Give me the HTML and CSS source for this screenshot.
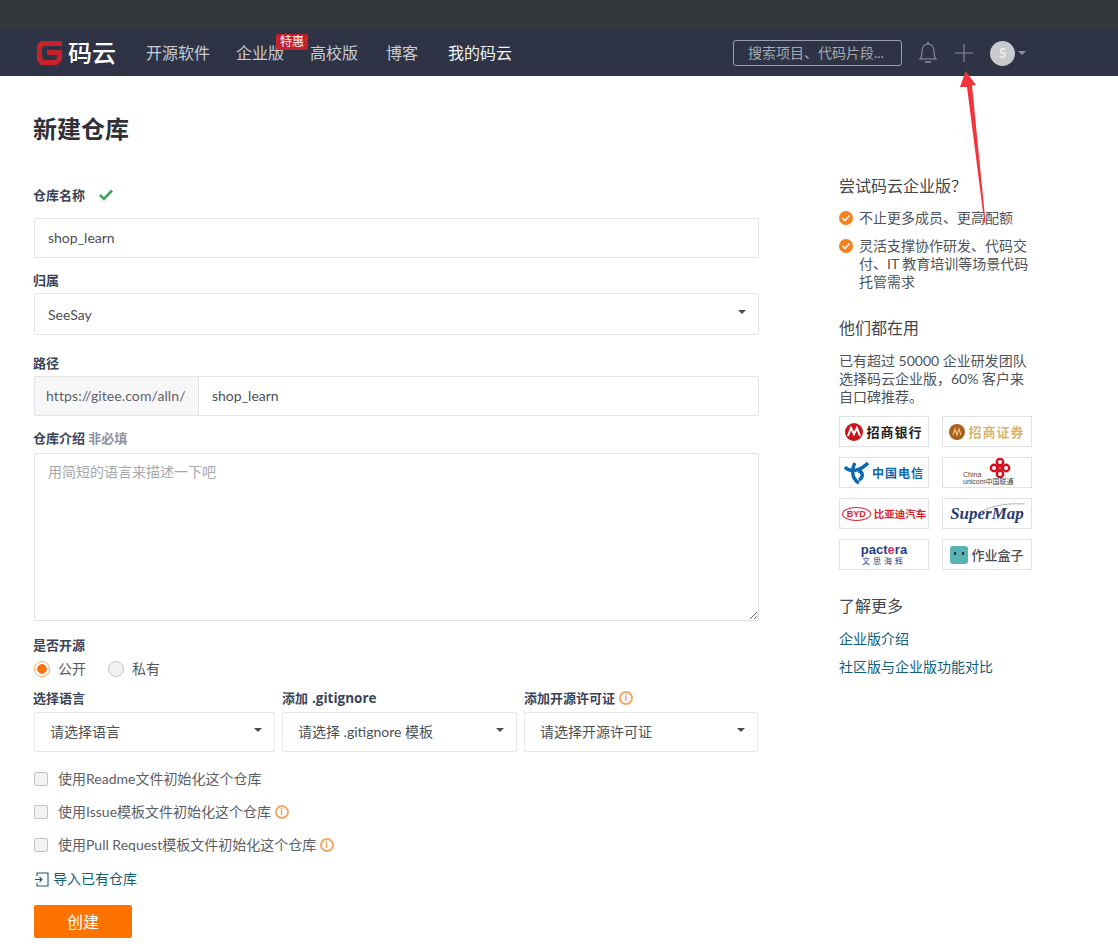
FILE: index.html
```html
<!DOCTYPE html>
<html lang="zh-CN">
<head>
<meta charset="utf-8">
<title>新建仓库</title>
<link rel="stylesheet" href="styles.css">
</head>
<body>
<div class="topbar"></div>
<header class="nav">
  <a class="brand">
    <svg class="brand-icon" width="25" height="24" viewBox="0 0 25 24"><path d="M4 0H25V5H7L5 7V17L7 19H18L20 17V14H10V9H25V19L20 24H4L0 20V4Z" fill="#c5222a"/></svg>
    <span class="brand-text">码云</span>
  </a>
  <a class="nav-link link-open">开源软件</a>
  <a class="nav-link link-ent">企业版<span class="badge">特惠</span></a>
  <a class="nav-link link-edu">高校版</a>
  <a class="nav-link link-blog">博客</a>
  <a class="nav-link link-mine">我的码云</a>
  <div class="nav-right">
    <div class="search">搜索项目、代码片段...</div>
    <svg class="bell" width="20" height="24" viewBox="0 0 20 24" fill="none" stroke="#8f939d" stroke-width="1.1"><path d="M2 18H18C16 16 16 14 16 10C16 6 13.500 3 10 3C6.500 3 4 6 4 10C4 14 4 16 2 18Z"/><path d="M10 3V1M7 21H13" stroke-width="1.600"/></svg>
    <svg class="plus" width="18" height="18" viewBox="0 0 18 18" stroke="#8a8e98" stroke-width="1.100"><path d="M0 9H18M9 0V18"/></svg>
    <div class="avatar">S</div>
    <span class="avatar-caret"></span>
  </div>
</header>

<main class="page">
  <section class="form">
    <h1 class="title">新建仓库</h1>
    <div class="label label-name">仓库名称
      <svg class="ok" width="14" height="12" viewBox="0 0 14 12" fill="none" stroke="#3fa55b" stroke-width="2.600"><path d="M1 6L5 10L13 1.500"/></svg>
    </div>
    <div class="control">shop_learn</div>
    <div class="label label-owner">归属</div>
    <div class="control control-select">SeeSay<span class="caret"></span></div>
    <div class="label label-path">路径</div>
    <div class="path-group">
      <div class="path-prefix">https://gitee.com/alln/</div>
      <div class="path-value">shop_learn</div>
    </div>
    <div class="label label-desc">仓库介绍 <span class="optional">非必填</span></div>
    <textarea class="desc" placeholder="用简短的语言来描述一下吧"></textarea>
    <div class="label label-open">是否开源</div>
    <div class="radios">
      <span class="radio radio-on"></span><span class="radio-text">公开</span>
      <span class="radio"></span><span class="radio-text">私有</span>
    </div>
    <div class="triple">
      <div class="col">
        <div class="label">选择语言</div>
        <div class="pick">请选择语言<span class="caret"></span></div>
      </div>
      <div class="col col-next">
        <div class="label">添加 <b class="latin-bold">.gitignore</b></div>
        <div class="pick">请选择 .gitignore 模板<span class="caret"></span></div>
      </div>
      <div class="col col-next">
        <div class="label">添加开源许可证 <span class="info">i</span></div>
        <div class="pick">请选择开源许可证<span class="caret"></span></div>
      </div>
    </div>
    <div class="check"><span class="box"></span>使用Readme文件初始化这个仓库</div>
    <div class="check"><span class="box"></span>使用Issue模板文件初始化这个仓库 <span class="info">i</span></div>
    <div class="check"><span class="box"></span>使用Pull Request模板文件初始化这个仓库 <span class="info">i</span></div>
    <a class="import">
      <svg width="15" height="15" viewBox="0 0 15 15" fill="none" stroke="#125d78" stroke-width="1.100"><path d="M3 4V1H14V14H3V11M1 7.500H8M5.500 5L8 7.500L5.500 10"/></svg>
      导入已有仓库
    </a>
    <button class="submit">创建</button>
  </section>

  <aside class="side">
    <h3 class="side-title">尝试码云企业版？</h3>
    <div class="perk perk-first"><span class="tick"><svg width="14" height="14" viewBox="0 0 14 14"><circle cx="7" cy="7" r="7" fill="#f5821f"/><path d="M3.500 7L6 9.500L10.500 4.500" fill="none" stroke="#fff" stroke-width="1.500"/></svg></span><span>不止更多成员、更高配额</span></div>
    <div class="perk"><span class="tick"><svg width="14" height="14" viewBox="0 0 14 14"><circle cx="7" cy="7" r="7" fill="#f5821f"/><path d="M3.500 7L6 9.500L10.500 4.500" fill="none" stroke="#fff" stroke-width="1.500"/></svg></span><span>灵活支撑协作研发、代码交付、IT 教育培训等场景代码托管需求</span></div>
    <h3 class="side-title side-users">他们都在用</h3>
    <p class="side-text">已有超过 50000 企业研发团队选择码云企业版，60% 客户来自口碑推荐。</p>
    <div class="logos">
      <div class="logo">
        <svg width="18" height="18" viewBox="0 0 18 18"><circle cx="9" cy="9" r="9" fill="#c8161d"/><path d="M3 13L6 5L9 11L12 5L15 13" fill="none" stroke="#fff" stroke-width="2"/></svg>
        <span class="lg-cmb">招商银行</span>
      </div>
      <div class="logo">
        <svg width="16" height="16" viewBox="0 0 16 16"><circle cx="8" cy="8" r="8" fill="#a8601c"/><path d="M4 11L6 5L8 11L10 5L12 11" fill="none" stroke="#f0c080" stroke-width="1.200"/></svg>
        <span class="lg-cms">招商证券</span>
      </div>
      <div class="logo">
        <svg width="25" height="25" viewBox="0 0 25 25" fill="none" stroke="#0a68b0" stroke-width="3.400"><path d="M1 7C6 13 16 11 24 3"/><path d="M11 3C7 10 8 19 15 23"/><path d="M14 11C19 11 20 17 15 20"/></svg>
        <span class="lg-ct">中国电信</span>
      </div>
      <div class="logo logo-unicom">
        <span class="lg-cu">China<br>unicom中国联通</span>
        <svg class="cu-knot" width="26" height="20" viewBox="0 0 26 20" fill="none" stroke="#d6101d" stroke-width="2.400"><circle cx="13" cy="4" r="3.200"/><circle cx="13" cy="16" r="3.200"/><circle cx="7" cy="10" r="3.200"/><circle cx="19" cy="10" r="3.200"/><circle cx="13" cy="10" r="2"/></svg>
      </div>
      <div class="logo">
        <span class="lg-byd-mark">BYD</span>
        <span class="lg-byd">比亚迪汽车</span>
      </div>
      <div class="logo logo-sm">
        <span class="lg-sm">SuperMap</span>
        <svg class="sm-arc" width="46" height="10" viewBox="0 0 46 10" fill="none" stroke="#9db4c0" stroke-width="1"><path d="M1 9C14 3 28 1 44 2"/></svg>
      </div>
      <div class="logo logo-stack">
        <span class="lg-pa">pact<i class="lg-pa-e">e</i>ra</span>
        <span class="lg-pa-cn">文思海辉</span>
      </div>
      <div class="logo">
        <svg width="18" height="18" viewBox="0 0 18 18"><rect width="18" height="18" rx="3" fill="#58b3b5"/><rect x="4" y="6" width="2" height="3" fill="#234"/><rect x="12" y="6" width="2" height="3" fill="#234"/></svg>
        <span class="lg-box">作业盒子</span>
      </div>
    </div>
    <h3 class="side-title side-more">了解更多</h3>
    <a class="side-link side-link-first">企业版介绍</a>
    <a class="side-link">社区版与企业版功能对比</a>
  </aside>
</main>

<svg class="arrow" width="32" height="153" viewBox="0 0 32 153"><path d="M10.600 0L21 14L17 14.500L30.600 152L29.400 152L12 16L5 16Z" fill="#f5333c"/></svg>
</body>
</html>
```
FILE: styles.css
```css
* { box-sizing: border-box; }
html, body { margin: 0; padding: 0; }
body {
  position: relative;
  background: #fff;
  color: #40485b;
  font: 14px/20px Lato, "Noto Sans CJK SC", sans-serif;
}
.topbar { height: 30px; background: #33363b; }
.nav {
  height: 46px;
  background: #2e3345;
  display: flex;
  align-items: center;
  padding-left: 37px;
  color: #c9ccd2;
  font-size: 16px;
}
.brand { display: flex; align-items: center; gap: 6px; margin-right: 30px; }
.brand-icon { display: block; }
.brand-text { color: #fff; font-size: 24px; font-weight: 500; letter-spacing: 0; line-height: 28px; }
.nav-link { position: relative; white-space: nowrap; }
.link-ent, .link-edu { margin-left: 26px; }
.link-blog { margin-left: 28px; }
.link-mine { margin-left: 30px; color: #f2f3f5; }
.badge {
  position: absolute;
  left: 40px;
  top: -9px;
  width: 32px;
  height: 16px;
  border-radius: 2px;
  background: #c5222a;
  color: #fff;
  font-size: 12px;
  line-height: 16px;
  text-align: center;
}
.nav-right { margin-left: auto; display: flex; align-items: center; padding-right: 92px; }
.search {
  width: 169px;
  height: 26px;
  border: 1px solid #9a9ea8;
  border-radius: 3px;
  padding-left: 14px;
  font-size: 14px;
  line-height: 24px;
  color: #a6a9b1;
  white-space: nowrap;
}
.bell { margin-left: 16px; }
.plus { margin-left: 17px; }
.avatar {
  width: 25px;
  height: 25px;
  margin-left: 17px;
  border-radius: 50%;
  background: #c8cacd;
  color: #eceded;
  font-size: 13px;
  font-weight: 700;
  line-height: 25px;
  text-align: center;
}
.avatar-caret {
  margin-left: 3px;
  border-left: 4px solid transparent;
  border-right: 4px solid transparent;
  border-top: 4px solid #8d919b;
}

.page { display: flex; padding: 36px 0 0 34px; }
.form { width: 725px; display: flex; flex-direction: column; }
.title {
  margin: 0 0 40px -1px;
  font-size: 24px;
  line-height: 34px;
  font-weight: 700;
  color: #2f3136;
}
.label {
  margin-left: -1px;
  padding-bottom: 2px;
  font-size: 13px;
  font-weight: 700;
  line-height: 18px;
  color: #3b4458;
  white-space: nowrap;
}
.label-name { margin-bottom: 12px; display: flex; align-items: center; }
.ok { margin-left: 14px; }
.label-owner { margin-top: 13px; margin-bottom: 2px; }
.label-path { margin-top: 19px; margin-bottom: 2px; }
.label-desc { margin-top: 13px; margin-bottom: 4px; }
.label-open { margin-top: 15px; margin-bottom: 3px; }
.optional { color: #8c92a4; }
.control {
  position: relative;
  height: 40px;
  border: 1px solid #e3e4e6;
  border-radius: 2px;
  padding-left: 13px;
  line-height: 38px;
  color: #4c4f55;
}
.control-select { height: 42px; line-height: 42px; }
.caret {
  position: absolute;
  right: 12px;
  top: 50%;
  margin-top: -4px;
  border-left: 4px solid transparent;
  border-right: 4px solid transparent;
  border-top: 4px solid #4a4d55;
}
.path-group { display: flex; height: 40px; border: 1px solid #e3e4e6; border-radius: 2px; line-height: 38px; }
.path-prefix {
  width: 164px;
  padding-left: 11px;
  background: #f7f7f8;
  border-right: 1px solid #e3e4e6;
  color: #5e6168;
  letter-spacing: .1px;
  white-space: nowrap;
}
.path-value { padding-left: 13px; color: #4c4f55; }
.desc {
  display: block;
  width: 725px;
  height: 168px;
  margin: 0;
  padding: 8px 13px;
  border: 1px solid #e0e1e3;
  border-radius: 2px;
  font: inherit;
  color: #4c4f55;
  outline: none;
}
.desc::placeholder { color: #a6a8ad; opacity: 1; }
.radios { display: flex; align-items: center; height: 20px; }
.radio {
  width: 16px;
  height: 16px;
  border-radius: 50%;
  border: 1px solid #c6c7ca;
  background: #f2f2f3;
}
.radio-on {
  border: 1.500px solid #f9a868;
  background: radial-gradient(circle, #f5720f 0 4.500px, #fff 5px);
}
.radio-text { margin-left: 8px; margin-right: 22px; color: #55585f; }
.triple { display: grid; grid-template-columns: 241px 235px 234px; column-gap: 7px; margin-top: 10px; }
.triple .label { margin-bottom: 3px; display: flex; align-items: center; gap: 4px; }
.col-next .label { margin-left: 0; }
.latin-bold { color: #3b4458; font: 700 13.500px/18px "Open Sans", sans-serif; }
.pick {
  position: relative;
  height: 40px;
  border: 1px solid #e6e7e9;
  border-radius: 2px;
  padding-left: 15px;
  line-height: 38px;
  color: #4c4f55;
  white-space: nowrap;
}
.check { display: flex; align-items: center; height: 20px; margin-bottom: 13px; color: #5b5e66; white-space: pre; }
.triple + .check { margin-top: 17px; }
.box {
  width: 14px;
  height: 14px;
  margin-right: 10px;
  border: 1px solid #c4c5c8;
  border-radius: 2px;
  background: #f2f2f3;
}
.info {
  display: inline-block;
  width: 14px;
  height: 14px;
  border: 2px solid #f3a866;
  border-radius: 50%;
  color: #ee8a3c;
  font-size: 9px;
  font-weight: 700;
  line-height: 10px;
  text-align: center;
}
.import { display: flex; align-items: center; gap: 4px; height: 20px; margin-top: 1px; color: #125d78; }
.submit {
  width: 98px;
  height: 33px;
  margin-top: 16px;
  border: 0;
  border-radius: 2px;
  background: #fe7300;
  color: #fff;
  font: inherit;
  font-size: 16px;
  padding: 0;
}

.side { width: 193px; margin-left: 80px; padding-top: 64px; font-size: 14px; line-height: 18px; color: #50535a; }
.side-title { margin: 0; font-size: 16px; font-weight: 400; line-height: 20px; color: #43464c; }
.perk { display: flex; gap: 6px; margin-bottom: 10px; }
.perk-first { margin-top: 13px; }
.tick { flex: none; height: 18px; display: flex; align-items: center; }
.side-users { margin-top: 27px; }
.side-text { margin: 14px 0 0; }
.logos { display: grid; grid-template-columns: 90px 90px; grid-auto-rows: 31px; gap: 10px 13px; margin-top: 10px; }
.logo {
  display: flex;
  align-items: center;
  justify-content: center;
  gap: 3px;
  border: 1px solid #dfe2e6;
  overflow: hidden;
  white-space: nowrap;
  font-size: 12px;
  line-height: 14px;
}
.logo-stack { flex-direction: column; gap: 0; }
.logo-unicom { align-items: flex-end; gap: 0; justify-content: flex-start; padding-left: 20px; }
.logo-sm { position: relative; }
.sm-arc { position: absolute; right: 4px; top: 3px; }
.lg-cmb { font: 700 13px/14px "Noto Sans CJK SC", sans-serif; color: #222; letter-spacing: 1px; }
.lg-cms { font: 700 13px/14px "Noto Sans CJK SC", sans-serif; color: #d8b671; letter-spacing: 1px; }
.lg-ct { font: 700 12px/14px "Noto Sans CJK SC", sans-serif; color: #0a68b0; letter-spacing: 1px; }
.lg-cu { font: 400 7px/7px "Liberation Sans", "Noto Sans CJK SC", sans-serif; color: #444; padding-bottom: 2px; flex: none; }
.cu-knot { flex: none; margin-left: -27px; align-self: flex-start; }
.lg-byd-mark {
  border: 1.500px solid #d9232e;
  border-radius: 50%;
  padding: 0 4px;
  color: #d9232e;
  font: 700 9px/12px "Liberation Sans", sans-serif;
}
.lg-byd { color: #d9232e; font: 700 10.500px/14px "Noto Sans CJK SC", sans-serif; }
.lg-sm { font: italic 700 17px/20px "Liberation Serif", serif; color: #2c3a72; }
.lg-pa { font: 700 13px/13px "Liberation Sans", sans-serif; color: #1f3f87; }
.lg-pa-e { color: #d6336c; font-style: normal; }
.lg-pa-cn { font: 400 8px/10px "Noto Sans CJK SC", sans-serif; color: #1f3f87; letter-spacing: 3px; }
.lg-box { font: 500 13px/14px "Noto Sans CJK SC", sans-serif; color: #4a4d50; }
.side-more { margin-top: 26px; }
.side-link { display: block; font-size: 14px; line-height: 20px; color: #125d78; }
.side-link-first { margin-top: 13px; margin-bottom: 8px; }

.arrow { position: absolute; left: 955px; top: 71px; }
```
